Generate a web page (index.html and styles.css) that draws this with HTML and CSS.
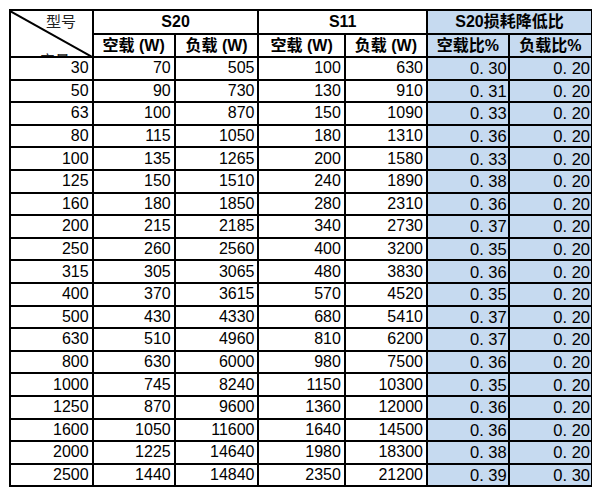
FILE: index.html
```html
<!DOCTYPE html>
<html>
<head>
<meta charset="utf-8">
<link rel="stylesheet" href="styles.css">
</head>
<body>
<table class="grid">
  <colgroup>
    <col class="c1"><col class="c2"><col class="c3"><col class="c4"><col class="c5"><col class="c6"><col class="c7">
  </colgroup>
  <thead>
    <tr class="h1">
      <th rowspan="2" class="diag">
        <div class="diag-box">
          <svg class="diag-line" width="84" height="47" viewBox="0 0 84 47"><line x1="0" y1="0" x2="84" y2="47" stroke="#000" stroke-width="2"/></svg>
          <span class="lbl-top">型号</span>
          <span class="lbl-bot">容量</span>
        </div>
      </th>
      <th colspan="2" class="grp">S20</th>
      <th colspan="2" class="grp">S11</th>
      <th colspan="2" class="grp blue">S20损耗降低比</th>
    </tr>
    <tr class="h2">
      <th class="sub">空载 (W)</th>
      <th class="sub">负载 (W)</th>
      <th class="sub">空载 (W)</th>
      <th class="sub">负载 (W)</th>
      <th class="sub blue">空载比%</th>
      <th class="sub blue">负载比%</th>
    </tr>
  </thead>
  <tbody>
    <tr><td>30</td><td>70</td><td>505</td><td>100</td><td>630</td><td class="pct">0. 30</td><td class="pct">0. 20</td></tr>
    <tr><td>50</td><td>90</td><td>730</td><td>130</td><td>910</td><td class="pct">0. 31</td><td class="pct">0. 20</td></tr>
    <tr><td>63</td><td>100</td><td>870</td><td>150</td><td>1090</td><td class="pct">0. 33</td><td class="pct">0. 20</td></tr>
    <tr><td>80</td><td>115</td><td>1050</td><td>180</td><td>1310</td><td class="pct">0. 36</td><td class="pct">0. 20</td></tr>
    <tr><td>100</td><td>135</td><td>1265</td><td>200</td><td>1580</td><td class="pct">0. 33</td><td class="pct">0. 20</td></tr>
    <tr><td>125</td><td>150</td><td>1510</td><td>240</td><td>1890</td><td class="pct">0. 38</td><td class="pct">0. 20</td></tr>
    <tr><td>160</td><td>180</td><td>1850</td><td>280</td><td>2310</td><td class="pct">0. 36</td><td class="pct">0. 20</td></tr>
    <tr><td>200</td><td>215</td><td>2185</td><td>340</td><td>2730</td><td class="pct">0. 37</td><td class="pct">0. 20</td></tr>
    <tr><td>250</td><td>260</td><td>2560</td><td>400</td><td>3200</td><td class="pct">0. 35</td><td class="pct">0. 20</td></tr>
    <tr><td>315</td><td>305</td><td>3065</td><td>480</td><td>3830</td><td class="pct">0. 36</td><td class="pct">0. 20</td></tr>
    <tr><td>400</td><td>370</td><td>3615</td><td>570</td><td>4520</td><td class="pct">0. 35</td><td class="pct">0. 20</td></tr>
    <tr><td>500</td><td>430</td><td>4330</td><td>680</td><td>5410</td><td class="pct">0. 37</td><td class="pct">0. 20</td></tr>
    <tr><td>630</td><td>510</td><td>4960</td><td>810</td><td>6200</td><td class="pct">0. 37</td><td class="pct">0. 20</td></tr>
    <tr><td>800</td><td>630</td><td>6000</td><td>980</td><td>7500</td><td class="pct">0. 36</td><td class="pct">0. 20</td></tr>
    <tr><td>1000</td><td>745</td><td>8240</td><td>1150</td><td>10300</td><td class="pct">0. 35</td><td class="pct">0. 20</td></tr>
    <tr><td>1250</td><td>870</td><td>9600</td><td>1360</td><td>12000</td><td class="pct">0. 36</td><td class="pct">0. 20</td></tr>
    <tr><td>1600</td><td>1050</td><td>11600</td><td>1640</td><td>14500</td><td class="pct">0. 36</td><td class="pct">0. 20</td></tr>
    <tr><td>2000</td><td>1225</td><td>14640</td><td>1980</td><td>18300</td><td class="pct">0. 38</td><td class="pct">0. 20</td></tr>
    <tr><td>2500</td><td>1440</td><td>14840</td><td>2350</td><td>21200</td><td class="pct">0. 39</td><td class="pct">0. 30</td></tr>
  </tbody>
</table>
</body>
</html>
```
FILE: styles.css
```css
html, body {
  background: #ffffff;
}
body {
  margin: 9px 8px 8px 9px;
  font-family: "Liberation Sans", "Noto Sans CJK SC", sans-serif;
  color: #000;
}
.grid {
  border-collapse: collapse;
  table-layout: fixed;
  width: 584px;
}
.c1 { width: 14.2%; }
.c2 { width: 14.1%; }
.c3 { width: 14.4%; }
.c4 { width: 14.85%; }
.c5 { width: 14.1%; }
.c6 { width: 14.05%; }
.c7 { width: 14.3%; }
.grid th, .grid td {
  border: 2px solid #000;
  padding: 0 3px 0 0;
  overflow: hidden;
  white-space: nowrap;
}
.grid td {
  text-align: right;
  font-size: 16px;
  height: 20.6px;
  line-height: 18px;
}
.h1 { height: 24px; }
.h2 { height: 23px; }
.grp {
  font-size: 16px;
  font-weight: bold;
  text-align: center;
  border-bottom: 1px solid #555 !important;
  padding: 0 !important;
  line-height: 18px;
}
.sub {
  font-size: 16px;
  font-weight: bold;
  text-align: center;
  padding: 0 !important;
  line-height: 18px;
}
.blue {
  background: #c6daf0;
}
.grid td.pct {
  background: #c6daf0;
  font-size: 16.5px;
  padding-right: 1px;
}
.diag {
  padding: 0 !important;
  position: relative;
}
.diag-box {
  position: relative;
  height: 45px;
  overflow: hidden;
}
.diag-line {
  position: absolute;
  left: -1px;
  top: 0;
}
.lbl-top {
  position: absolute;
  left: 35px;
  top: 2px;
  font-size: 15px;
  font-weight: normal;
  color: #222;
  line-height: 18px;
}
.lbl-bot {
  position: absolute;
  left: 29px;
  top: 41px;
  font-size: 15px;
  font-weight: normal;
  color: #222;
  line-height: 18px;
}
```
